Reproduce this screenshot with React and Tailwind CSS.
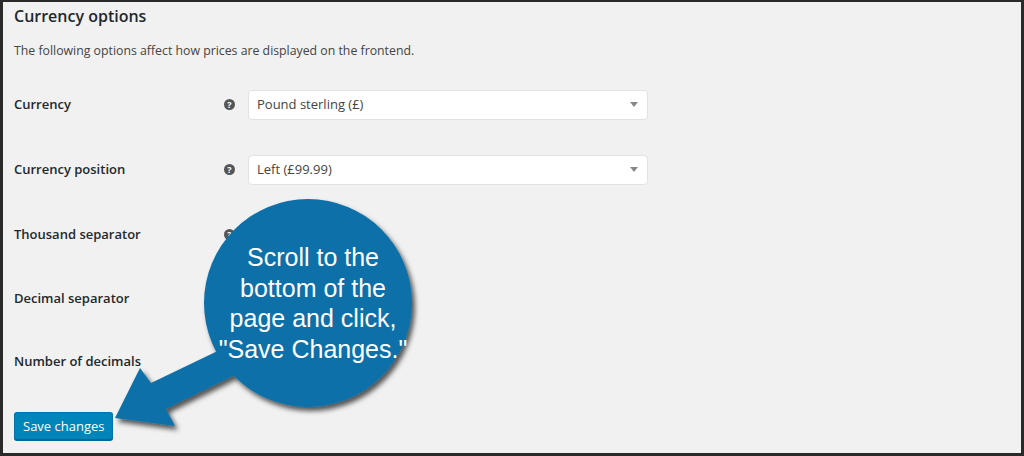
import React from "react";

// WooCommerce currency options screen with a callout bubble pointing at the save button

const HelpTip = () => (
  <span className="flex h-[11px] w-[11px] items-center justify-center rounded-full bg-[#555] text-[9px] font-bold leading-none text-white">
    ?
  </span>
);

const SelectBox = ({ value }) => (
  <div className="flex h-[30px] w-[400px] items-center justify-between rounded-[4px] border border-[#e2e2e2] bg-white pl-[8px] pr-[9px] text-[13px] text-[#444]">
    <span>{value}</span>
    <span className="h-0 w-0 border-x-[4px] border-t-[5px] border-x-transparent border-t-[#888]"></span>
  </div>
);

const SmallInput = () => (
  <div className="h-[30px] w-[50px] rounded-[2px] border border-[#ddd] bg-white"></div>
);

const rows = [
  { label: "Currency", h: "h-[65px]", tip: true, field: <SelectBox value="Pound sterling (£)" /> },
  { label: "Currency position", h: "h-[65px]", tip: true, field: <SelectBox value="Left (£99.99)" /> },
  { label: "Thousand separator", h: "h-[65px]", tip: true, field: <SmallInput /> },
  { label: "Decimal separator", h: "h-[63px]", tip: false, field: <SmallInput /> },
  { label: "Number of decimals", h: "h-[63px]", tip: false, field: <SmallInput /> },
];

const Callout = () => (
  <>
    <svg
      className="pointer-events-none absolute left-0 top-0"
      width="1024"
      height="456"
      viewBox="0 0 1024 456"
    >
      <defs>
        <filter id="shadow" x="-20%" y="-20%" width="140%" height="140%">
          <feDropShadow dx="3" dy="4" stdDeviation="2.5" floodColor="#000" floodOpacity="0.65" />
        </filter>
      </defs>
      <g filter="url(#shadow)" fill="#0e6fa8">
        <polygon points="112,416 137,366 148,381 250,332 262,358 163,407 172,424" />
        <circle cx="305" cy="301" r="104" />
      </g>
    </svg>
    <div className="absolute left-[201px] top-[240px] w-[218px] text-center font-[family-name:'Liberation_Sans',Arial,sans-serif] text-[25px] leading-[30.5px] text-white">
      Scroll to the
      <br />
      bottom of the
      <br />
      page and click,
      <br />
      "Save Changes."
    </div>
  </>
);

export default function App() {
  return (
    <div className="relative h-[456px] w-[1024px] overflow-hidden border-b-[3px] border-l-[3px] border-r-[3px] border-t-2 border-[#2a2a2a] bg-[#f1f1f1] font-['Open_Sans','Noto_Sans',sans-serif]">
      <div className="pl-[11px] pt-[4px]">
        <h2 className="text-[16px] font-semibold leading-[20px] text-[#23282d]">Currency options</h2>
        <p className="mt-[15px] text-[12.3px] leading-[20px] text-[#444]">
          The following options affect how prices are displayed on the frontend.
        </p>

        <div className="mt-[11px] flex flex-col">
          {rows.map((row) => (
            <div key={row.label} className={`flex items-center ${row.h}`}>
              <div className="w-[210px] text-[13px] font-semibold text-[#23282d]">{row.label}</div>
              <div className="flex w-[24px] justify-start">
                {row.tip && <HelpTip />}
              </div>
              <div>{row.field}</div>
            </div>
          ))}
        </div>

        <button className="mt-[19px] h-[28px] rounded-[3px] border border-[#0073aa] border-b-[#006799] bg-[#0085ba] px-[8px] text-[13px] leading-[26px] text-white shadow-[0_1px_0_#006799]">
          Save changes
        </button>
      </div>
      <Callout />
    </div>
  );
}
